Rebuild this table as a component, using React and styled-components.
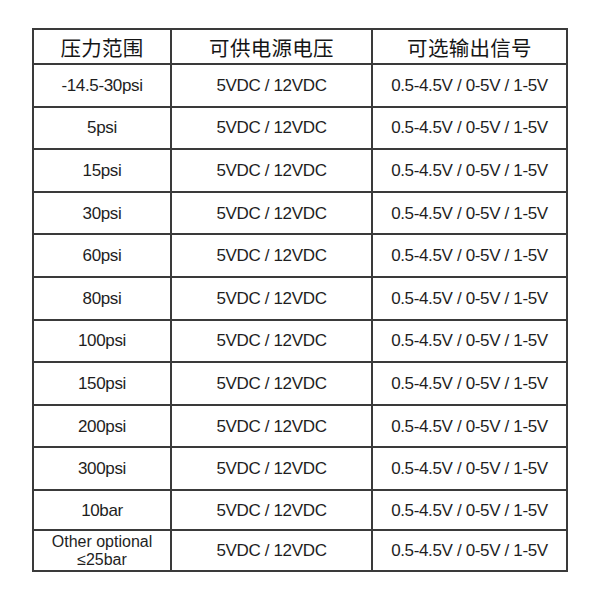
import React from 'react';
import styled, { createGlobalStyle } from 'styled-components';

const GlobalStyle = createGlobalStyle`
  html, body {
    margin: 0;
    padding: 0;
    background: #ffffff;
  }
`;

const Page = styled.div`
  width: 600px;
  height: 600px;
  padding: 28px 0 0 32px;
  box-sizing: border-box;
  background: #ffffff;
`;

const Table = styled.div`
  display: grid;
  grid-template-columns: 136px 199px 193px;
  grid-template-rows: 33px repeat(10, 40.6px) repeat(2, 38.4px);
  gap: 2px;
  padding: 2px;
  width: max-content;
  background: #3a3a3a;
`;

const HeadCell = styled.div`
  display: flex;
  align-items: center;
  justify-content: center;
  background: #ffffff;
  color: #151515;
  font-family: "Noto Sans CJK SC", "Noto Sans", sans-serif;
  font-size: 20.5px;
  letter-spacing: 0.3px;
`;

const Cell = styled.div`
  display: flex;
  align-items: center;
  justify-content: center;
  text-align: center;
  background: #ffffff;
  color: #1e1e1e;
  font-family: "Liberation Sans", Arial, sans-serif;
  font-size: ${(p) => (p.$small ? '16px' : '17px')};
  letter-spacing: ${(p) => (p.$small ? '0' : '-0.35px')};
  line-height: ${(p) => (p.$small ? '18px' : '20px')};
  padding-top: 1px;
`;

const ranges = [
  '-14.5-30psi',
  '5psi',
  '15psi',
  '30psi',
  '60psi',
  '80psi',
  '100psi',
  '150psi',
  '200psi',
  '300psi',
  '10bar',
];

const App = () => (
  <>
    <GlobalStyle />
    <Page>
      <Table>
        <HeadCell>压力范围</HeadCell>
        <HeadCell>可供电源电压</HeadCell>
        <HeadCell>可选输出信号</HeadCell>
        {ranges.map((r) => (
          <React.Fragment key={r}>
            <Cell>{r}</Cell>
            <Cell>5VDC / 12VDC</Cell>
            <Cell>0.5-4.5V / 0-5V / 1-5V</Cell>
          </React.Fragment>
        ))}
        <Cell $small>
          Other optional
          <br />
          ≤25bar
        </Cell>
        <Cell>5VDC / 12VDC</Cell>
        <Cell>0.5-4.5V / 0-5V / 1-5V</Cell>
      </Table>
    </Page>
  </>
);

export default App;
